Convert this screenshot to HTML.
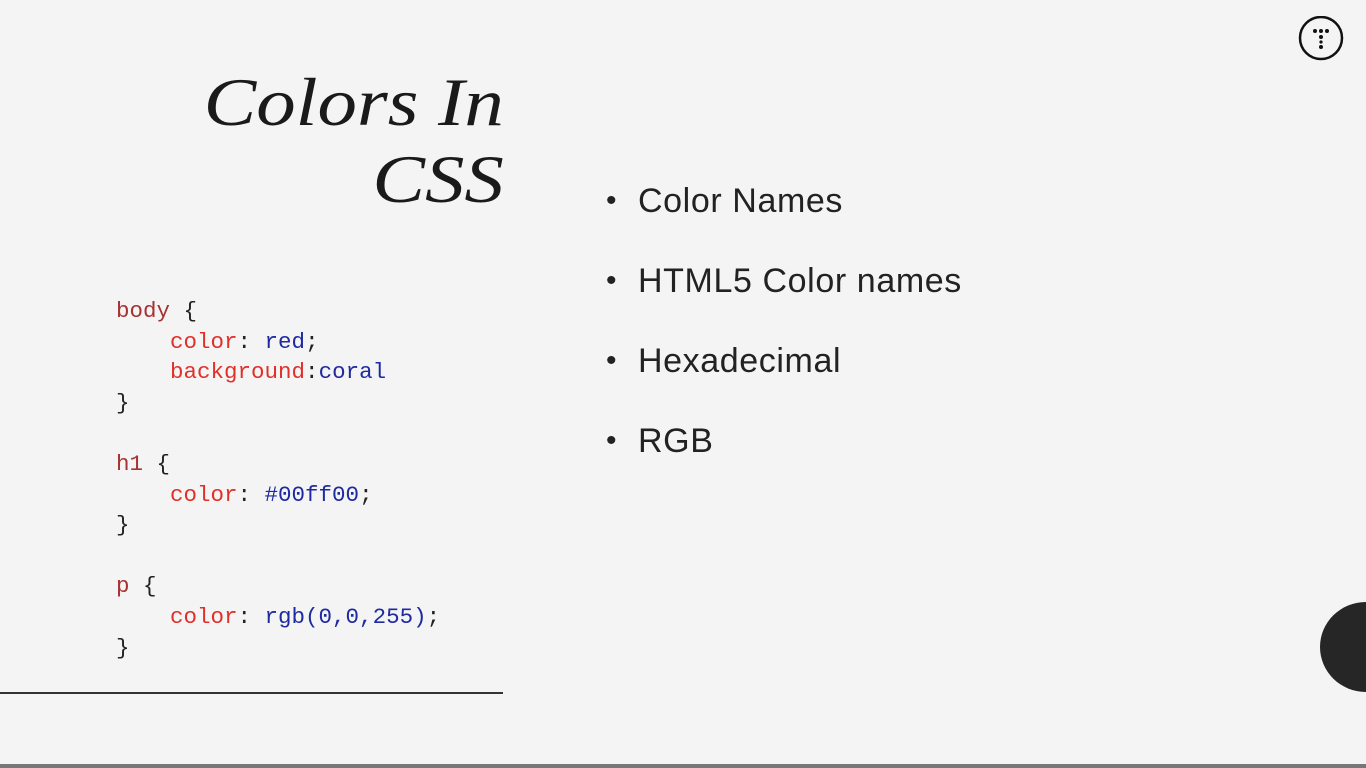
<!DOCTYPE html>
<html><head><style>
body{margin:0;width:1366px;height:768px;background:#f4f4f4;position:relative;overflow:hidden;font-family:"Liberation Sans",sans-serif}
.t{position:absolute;right:862px;font-family:"Liberation Serif",serif;font-style:italic;font-size:68px;color:#1a1a1a;text-align:right;line-height:77px;top:64px;transform:scaleX(1.16);transform-origin:right top}
pre{position:absolute;left:116px;top:296px;margin:0;font-family:"Liberation Mono",monospace;font-size:22.5px;line-height:30.6px;color:#222}
.s{color:#a83232}.p{color:#e0302a}.v{color:#1e2aa0}
ul{position:absolute;left:606px;top:178px;margin:0;padding:0;list-style:none;font-size:34px;color:#222;letter-spacing:0.6px}
li{height:80px;line-height:46px}
li:before{content:"•";display:inline-block;width:32px;font-size:30px;vertical-align:top}
</style></head><body>
<div class="t">Colors In<br>CSS</div>
<pre><span class="s">body</span> {
    <span class="p">color</span>: <span class="v">red</span>;
    <span class="p">background</span>:<span class="v">coral</span>
}

<span class="s">h1</span> {
    <span class="p">color</span>: <span class="v">#00ff00</span>;
}

<span class="s">p</span> {
    <span class="p">color</span>: <span class="v">rgb(0,0,255)</span>;
}</pre>
<ul><li>Color Names</li><li>HTML5 Color names</li><li>Hexadecimal</li><li>RGB</li></ul>
<div style="position:absolute;left:0;top:692px;width:503px;height:2px;background:#333"></div>
<div style="position:absolute;left:1320px;top:602px;width:92px;height:90px;border-radius:50%;background:#262626"></div>
<div style="position:absolute;left:0;top:764px;width:1366px;height:4px;background:#777"></div>
<svg style="position:absolute;left:1297px;top:16px" width="48" height="46" viewBox="0 0 48 46"><circle cx="24" cy="22" r="21" fill="none" stroke="#111" stroke-width="2.5"/><g fill="#111"><circle cx="18" cy="15" r="2"/><circle cx="24" cy="15" r="2"/><circle cx="30" cy="15" r="2"/><circle cx="24" cy="21" r="2"/><circle cx="24" cy="26" r="1.6"/><circle cx="24" cy="31" r="2"/></g></svg>
</body></html>
